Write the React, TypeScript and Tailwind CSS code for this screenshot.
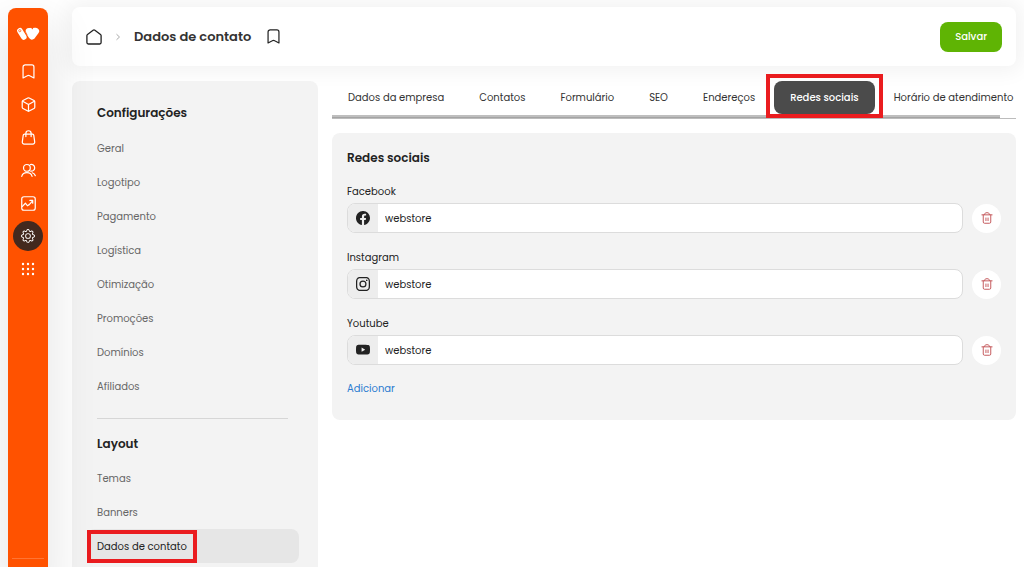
import React, { useState } from 'react';
import { BsFacebook, BsGear, BsInstagram, BsYoutube } from 'react-icons/bs';

interface LineIconProps {
  className?: string;
  children: React.ReactNode;
}

const LineIcon: React.FC<LineIconProps> = ({ className = 'size-[15px]', children }) => (
  <svg
    viewBox="0 0 16 16"
    fill="none"
    stroke="currentColor"
    strokeWidth="1.3"
    strokeLinecap="round"
    strokeLinejoin="round"
    className={className}
    aria-hidden="true"
  >
    {children}
  </svg>
);

const BookmarkIcon = () => (
  <LineIcon>
    <path d="M2.200 14.900V3.100a2.200 2.200 0 0 1 2.200-2.200h7.200a2.200 2.200 0 0 1 2.200 2.200v11.800L9.300 12.600a2.600 2.600 0 0 0-2.600 0z" />
  </LineIcon>
);

const HomeIcon = () => (
  <LineIcon className="size-4">
    <path d="M.9 6.500a1.500 1.500 0 0 1 .6-1.100L7.100 1.200a1.500 1.500 0 0 1 1.800 0l5.600 4.200a1.500 1.500 0 0 1 .6 1.100v7.100a1.400 1.400 0 0 1-1.400 1.400H2.300A1.400 1.400 0 0 1 .9 13.600z" />
  </LineIcon>
);

const BoxIcon = () => (
  <LineIcon>
    <path d="M7.300 1a1.500 1.500 0 0 1 1.400 0l5.200 2.800a1.500 1.500 0 0 1 .8 1.300v5.800a1.500 1.500 0 0 1-.8 1.300L8.700 15a1.500 1.500 0 0 1-1.400 0l-5.200-2.800a1.500 1.500 0 0 1-.8-1.300V5.100a1.500 1.500 0 0 1 .8-1.300z" />
    <path d="M1.700 4.500 8 8l6.300-3.500M8 8v7" />
  </LineIcon>
);

const BagIcon = () => (
  <LineIcon>
    <path d="M3.700 4.400h8.600a1.300 1.300 0 0 1 1.300 1.100l1 7.100a2 2 0 0 1-2 2.400H3.400a2 2 0 0 1-2-2.400l1-7.100a1.300 1.300 0 0 1 1.300-1.100z" />
    <path d="M5.200 7V3.600a2.800 2.800 0 0 1 5.600 0V7" />
  </LineIcon>
);

const UsersIcon = () => (
  <LineIcon>
    <circle cx="6.300" cy="5.200" r="3.600" />
    <path d="M.8 14.200c.7-2.500 2.900-3.900 5.500-3.900s4.800 1.400 5.500 3.900M10 1.700a3.600 3.600 0 1 1 .3 7M12 10.400c1.700.4 2.800 1.500 3.300 3.200" />
  </LineIcon>
);

const ChartIcon = () => (
  <LineIcon>
    <rect x=".8" y=".8" width="14.400" height="14.400" rx="2.400" />
    <path d="m1.500 11 3.200-3.300 2.100 2.700 2-1.200 3.600-4M9.500 4.700h3v3" />
  </LineIcon>
);

const GridIcon = () => (
  <svg viewBox="0 0 16 16" fill="currentColor" className="size-4" aria-hidden="true">
    {[3, 8, 13].map((y) => [3, 8, 13].map((x) => <circle key={`${x}-${y}`} cx={x} cy={y} r="1.200" />))}
  </svg>
);

const TrashIcon = () => (
  <LineIcon className="size-3">
    <path d="M1.200 3.800h13.600M3 3.800v9.500A1.700 1.700 0 0 0 4.700 15h6.600a1.700 1.700 0 0 0 1.700-1.700V3.800M4.800 3.400l.6-1.500a1.400 1.400 0 0 1 1.300-.9h2.600a1.400 1.400 0 0 1 1.300.9l.6 1.500M6.600 8v3.500M9.400 8v3.500" />
  </LineIcon>
);

const Logo = () => (
  <svg viewBox="0 0 24 14" className="h-[14px] w-6" aria-hidden="true">
    <g stroke="#fff" strokeLinecap="round" strokeLinejoin="round">
      <path d="m3.900 3.800 3.900 6.200" strokeWidth="5.600" />
      <path d="M13 4.400 15.900 9 19.600 4.200z" fill="#fff" strokeWidth="7" />
    </g>
    <path d="M14.800 0h3l-1.500 2.600z" fill="#ff5200" />
    <path d="m8.600 3.200 2.600 4.600" stroke="#ff5200" strokeWidth=".6" />
    <circle cx="3.800" cy="3.700" r="1.100" fill="none" stroke="#ff5200" strokeWidth=".7" />
  </svg>
);

const railItems = [
  { label: 'Favoritos', icon: <BookmarkIcon /> },
  { label: 'Produtos', icon: <BoxIcon /> },
  { label: 'Vendas', icon: <BagIcon /> },
  { label: 'Clientes', icon: <UsersIcon /> },
  { label: 'Relatórios', icon: <ChartIcon /> },
  { label: 'Configurações', icon: <BsGear className="size-[14px]" />, active: true },
  { label: 'Aplicativos', icon: <GridIcon /> },
];

const settingsLinks = ['Geral', 'Logotipo', 'Pagamento', 'Logística', 'Otimização', 'Promoções', 'Domínios', 'Afiliados'];
const layoutLinks = ['Temas', 'Banners', 'Dados de contato'];

const tabs = ['Dados da empresa', 'Contatos', 'Formulário', 'SEO', 'Endereços', 'Redes sociais', 'Horário de atendimento'];

const networks = [
  { id: 'facebook', label: 'Facebook', icon: <BsFacebook className="size-[14px]" /> },
  { id: 'instagram', label: 'Instagram', icon: <BsInstagram className="size-[14px]" /> },
  { id: 'youtube', label: 'Youtube', icon: <BsYoutube className="size-[14px]" /> },
];

const NavRail = () => (
  <nav
    aria-label="Principal"
    className="relative z-10 flex w-10 shrink-0 flex-col items-center rounded-t-lg bg-[#ff5200] pt-[19px] text-white shadow-[0_24px_40px_12px_rgba(0,0,0,0.08)]"
  >
    <Logo />
    <div className="mt-[15px] flex flex-col gap-[3px]">
      {railItems.map((item) => (
        <button
          key={item.label}
          aria-label={item.label}
          className={`flex size-[30px] items-center justify-center rounded-full ${item.active ? 'bg-[#43291e]' : ''}`}
        >
          {item.icon}
        </button>
      ))}
    </div>
    <div className="mt-auto mb-2 h-px w-8 bg-white/20" />
  </nav>
);

const MenuLink: React.FC<{ label: string; active?: boolean }> = ({ label, active }) => (
  <li>
    <a
      href="#"
      className={`flex h-[34px] items-center rounded-lg px-[10px] ${active ? 'bg-[#e6e6e6] text-[#222]' : 'text-[#666]'}`}
    >
      {active ? (
        <span className="relative">
          {label}
          <span className="absolute -inset-x-[10px] -inset-y-[9px] border-4 border-[#ea1c1f]" />
        </span>
      ) : (
        label
      )}
    </a>
  </li>
);

const SettingsMenu = () => (
  <aside className="w-[246px] shrink-0 rounded-t-lg bg-[#f3f3f3] px-[15px] pt-[22px]">
    <h2 className="px-[10px] text-[12px] leading-5 font-semibold">Configurações</h2>
    <ul className="mt-2 pr-1">
      {settingsLinks.map((label) => (
        <MenuLink key={label} label={label} />
      ))}
    </ul>
    <hr className="mr-[15px] ml-[10px] mt-[15px] border-[#d6d6d6]" />
    <h2 className="mt-[15px] px-[10px] text-[12px] leading-5 font-semibold">Layout</h2>
    <ul className="mt-[7px] pr-1">
      {layoutLinks.map((label) => (
        <MenuLink key={label} label={label} active={label === 'Dados de contato'} />
      ))}
    </ul>
  </aside>
);

const Tabs = () => (
  <div className="relative border-b border-[#bcbcbc]">
    <div role="tablist" className="flex gap-[3px] overflow-x-clip pb-px">
      {tabs.map((label) => {
        const active = label === 'Redes sociais';
        return (
          <button
            key={label}
            role="tab"
            aria-selected={active}
            className={`relative h-[33px] shrink-0 rounded-lg px-4 whitespace-nowrap ${active ? 'z-10 bg-[#4b4b4b] font-medium text-white' : 'text-[#333]'}`}
          >
            {label}
            {active && <span className="absolute -inset-x-2 -top-[7px] -bottom-1 border-4 border-[#ea1c1f]" />}
          </button>
        );
      })}
    </div>
    <div className="mr-4 h-[3px] border-b border-[#a4a4a4] bg-[#bebebe]" />
  </div>
);

const SocialForm = () => {
  const [values, setValues] = useState<Record<string, string>>({
    facebook: 'webstore',
    instagram: 'webstore',
    youtube: 'webstore',
  });

  return (
    <section className="mt-[14px] rounded-lg bg-[#f3f3f3] px-[15px] pt-[15px] pb-[21px]">
      <h2 className="text-[12px] leading-5 font-semibold">Redes sociais</h2>
      <div className="mt-[14px] flex flex-col gap-[14px]">
        {networks.map((network) => (
          <div key={network.id}>
            <label htmlFor={network.id} className="block leading-5">
              {network.label}
            </label>
            <div className="flex h-8 items-center gap-[9px]">
              <div className="flex h-[30px] flex-1 overflow-hidden rounded-lg border border-[#dcdcdc] bg-white">
                <span className="flex w-[30px] items-center justify-center bg-[#ededed]">{network.icon}</span>
                <input
                  id={network.id}
                  value={values[network.id]}
                  onChange={(e) => setValues({ ...values, [network.id]: e.target.value })}
                  className="min-w-0 flex-1 px-[7px] outline-none"
                />
              </div>
              <button
                aria-label={`Remover ${network.label}`}
                className="flex size-[29px] items-center justify-center rounded-full bg-white text-[#c4585c]"
              >
                <TrashIcon />
              </button>
            </div>
          </div>
        ))}
      </div>
      <button className="mt-[13px] block leading-5 text-[#2b7bd0]">Adicionar</button>
    </section>
  );
};

const App = () => (
  <div className="flex h-screen gap-6 overflow-hidden bg-white pt-2 pr-2 pl-2 font-[Poppins,Inter,sans-serif] text-[10px] text-[#222]">
    <NavRail />
    <div className="relative flex min-w-0 flex-1 flex-col">
      <header className="-mt-px flex h-[59px] shrink-0 items-center rounded-lg bg-white px-[14px] shadow-[0_0_20px_6px_rgba(0,0,0,0.05)]">
        <a href="#" aria-label="Início">
          <HomeIcon />
        </a>
        <svg viewBox="0 0 6 8" className="ml-[13px] h-2 w-[6px]" fill="none" stroke="#aaa" aria-hidden="true">
          <path d="m1.500 1.200 3 2.800-3 2.800" />
        </svg>
        <h1 className="ml-[13px] text-[13px] leading-5 font-semibold text-[#333]">Dados de contato</h1>
        <button aria-label="Favoritar" className="ml-[15px]">
          <BookmarkIcon />
        </button>
        <button className="ml-auto h-[30px] rounded-lg bg-[#5fb404] px-[15px] font-medium text-white">Salvar</button>
      </header>
      <div className="mt-[15px] flex min-h-0 flex-1 gap-[14px]">
        <SettingsMenu />
        <main className="min-w-0 flex-1">
          <Tabs />
          <SocialForm />
        </main>
      </div>
    </div>
  </div>
);

export default App;
